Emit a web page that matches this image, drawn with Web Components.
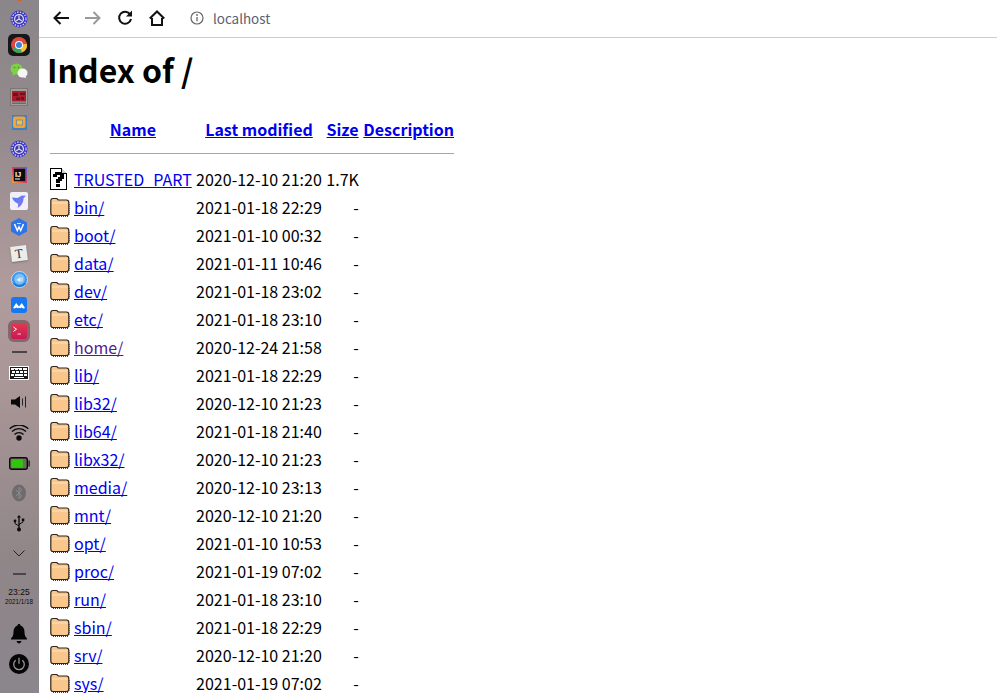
<!DOCTYPE html>
<html>
<head>
<meta charset="utf-8">
<title>Index of /</title>
<style>
  html, body { margin: 0; height: 693px; overflow: hidden; background: #fff; }
  body { display: flex; font-family: "Noto Sans CJK SC", "Noto Sans", sans-serif; }
  browser-window { flex: 1; min-width: 0; }
</style>
</head>
<body>
<desktop-dock></desktop-dock>
<browser-window>
  <browser-bar url="localhost"></browser-bar>
  <index-page heading="Index of /"></index-page>
</browser-window>

<script>
'use strict';

(function () {
  const GEAR = `
    <svg width="18" height="18" viewBox="0 0 18 18">
      <circle cx="9" cy="9" r="8.500" fill="#3a34c8"/>
      <circle cx="9" cy="9" r="7" fill="none" stroke="#dcdaf6" stroke-width="1.300" stroke-dasharray="1.500 1.300"/>
      <circle cx="9" cy="9" r="5" fill="#e4e2f8"/>
      <circle cx="9" cy="9" r="3.800" fill="#3f3a9c"/>
      <path d="M9 9V5.500M9 9l3 1.900M9 9l-3 1.900" stroke="#dedcf6" stroke-width="1.200"/>
    </svg>`;

  // [slot height, icon markup]
  const DOCK_ITEMS = [
    [26, GEAR],
    [26, `<svg width="22" height="22" viewBox="0 0 22 22">
      <rect width="22" height="22" rx="5" fill="#15171a"/>
      <circle cx="11" cy="11" r="8" fill="#e0483c"/>
      <path d="M11 11L4.100 15A8 8 0 0 0 14 18.400z" fill="#3ba55a"/>
      <path d="M11 11l3 7.400A8 8 0 0 0 18.900 9.800z" fill="#f4c430"/>
      <circle cx="11" cy="11" r="4" fill="#fff"/>
      <circle cx="11" cy="11" r="3" fill="#3b82e0"/>
    </svg>`],
    [26, `<svg width="18" height="16" viewBox="0 0 18 16">
      <ellipse cx="6.500" cy="6" rx="6" ry="5.500" fill="#7ed048"/>
      <path d="M3 10l-.8 3 3.400-2z" fill="#7ed048"/>
      <circle cx="4.500" cy="4.500" r=".8" fill="#4a8a22"/><circle cx="8.500" cy="4.500" r=".8" fill="#4a8a22"/>
      <ellipse cx="12.500" cy="10" rx="5" ry="4.500" fill="#f6f6f4"/>
      <path d="M15 13.500l1.400 2-3.400-1.500z" fill="#f6f6f4"/>
    </svg>`],
    [25, `<svg width="18" height="18" viewBox="0 0 18 18">
      <rect width="18" height="18" rx="1.500" fill="#6f6b69"/>
      <rect x=".8" y=".8" width="16.400" height="16.400" rx="1" fill="#a39e9b"/>
      <rect x="2" y="3" width="14" height="10.500" fill="#a81e2c"/>
      <path d="M3 5h5v3H3zM10 5h5v2h-5zM6 9.500h4v2.500H6zM11 9h3v3h-3z" fill="#6a1420"/>
      <rect x="2" y="14.500" width="14" height="1.500" fill="#6e6a68"/>
    </svg>`],
    [26, `<svg width="15" height="15" viewBox="0 0 15 15">
      <rect width="15" height="15" fill="#3f7fc2"/>
      <rect x="1" y="1.500" width="12.500" height="11.500" rx="2" fill="#f3a433"/>
      <rect x="4.500" y="5" width="6" height="5" fill="#eec24a" stroke="#6a86a8" stroke-width=".8"/>
    </svg>`],
    [27, GEAR],
    [26, `<svg width="15" height="16" viewBox="0 0 15 16">
      <defs><linearGradient id="ij" x1="0" y1="1" x2="1" y2="0"><stop offset="0" stop-color="#f0a03a"/><stop offset=".5" stop-color="#d83a6a"/><stop offset="1" stop-color="#4a6ad8"/></linearGradient></defs>
      <rect width="15" height="16" fill="url(#ij)"/>
      <rect x="1.800" y="1.800" width="11.400" height="12.400" fill="#0c0c0e"/>
      <text x="3" y="10" font-family="Liberation Sans" font-weight="700" font-size="7.500" fill="#fff">IJ</text>
      <rect x="3" y="11.500" width="5" height="1" fill="#fff"/>
    </svg>`],
    [26, `<svg width="18" height="18" viewBox="0 0 18 18">
      <defs><linearGradient id="bd" x1="0" y1="0" x2="1" y2="1"><stop offset="0" stop-color="#4a82f0"/><stop offset="1" stop-color="#9a72f2"/></linearGradient></defs>
      <rect width="18" height="18" rx="2" fill="#f1f0f8"/>
      <path d="M2 5.500l5.500.5L12 3.500l4 .2-2.500 2.600C13.500 11 11 14.500 7.500 16c.8-1.800.8-3.300.3-4.500C5 10.500 3 8.500 2 5.500z" fill="url(#bd)"/>
    </svg>`],
    [26, `<svg width="16" height="18" viewBox="0 0 16 18">
      <path d="M8 0l8 4.500v9L8 18l-8-4.500v-9z" fill="#2f73e8"/>
      <path d="M3.500 6l2.800 6.500L8 9l1.700 3.500L12.500 6" fill="none" stroke="#fff" stroke-width="1.500"/>
      <path d="M6 5.500h4" stroke="#cfe0fb"/>
    </svg>`],
    [26, `<div style="width:16px;height:15px;background:#ececea;transform:rotate(-7deg);font:13px/15px 'Liberation Serif',serif;color:#333;text-align:center;box-shadow:0 1px 2px #0004">T</div>`],
    [26, `<svg width="17" height="17" viewBox="0 0 17 17">
      <circle cx="8.500" cy="8.500" r="8" fill="#3a92ea" stroke="#bcdcf8" stroke-width="1"/>
      <circle cx="8.500" cy="8" r="5.400" fill="#7cc0f4"/>
      <path d="M5.500 9l4-3v5z" fill="#e8f3fd"/>
      <path d="M11 6.500v4" stroke="#e8f3fd"/>
      <path d="M2.500 12.500a8 8 0 0 0 12 0" fill="none" stroke="#1f72d6" stroke-width="1.500"/>
    </svg>`],
    [26, `<svg width="16" height="16" viewBox="0 0 16 16">
      <rect width="16" height="16" rx="3" fill="#1677f0"/>
      <path d="M2 11l3.200-5 2.800 3.500L10.800 6 14 11c-1.500 1-3 0-3.500-.5-.7 1-1.800 1-2.500.3-.7.700-1.800.700-2.500-.3C5 11 3.500 12 2 11z" fill="#fff"/>
    </svg>`],
    [26, `<svg width="22" height="22" viewBox="0 0 22 22">
      <rect width="22" height="22" rx="6" fill="#86656c"/>
      <defs><linearGradient id="tm" x1="0" y1="0" x2="0" y2="1"><stop offset="0" stop-color="#e23a4e"/><stop offset="1" stop-color="#c81858"/></linearGradient></defs>
      <rect x="3" y="3" width="16" height="16" rx="2.500" fill="url(#tm)"/>
      <path d="M5.500 7l3 2.200-3 2.200" fill="none" stroke="#fff" stroke-width="1"/>
      <path d="M9.500 14h3.500" stroke="#f7c9d2" stroke-width="1"/>
    </svg>`],
    [16, `<div style="width:15px;height:2px;background:#4a4648"></div>`],
    [26, `<svg width="20" height="14" viewBox="0 0 20 14" shape-rendering="crispEdges">
      <rect x=".5" y=".5" width="19" height="13" fill="#1a1a1a" stroke="#fff"/>
      <path d="M2 3h2v-1h-2zM5 3h2v-1h-2zM8 3h2v-1h-2z" fill="#fff"/>
      <path d="M2 2h3v2H2zM6 2h3v2H6zM10 2h3v2h-3zM14 2h4v2h-4zM3 5h3v2H3zM7 5h3v2H7zM11 5h3v2h-3zM15 5h3v2h-3zM2 8h3v2H2zM6 8h8v2H6zM15 8h3v2h-3zM5 11h10v1H5z" fill="#fff"/>
    </svg>`],
    [32, `<svg width="16" height="12" viewBox="0 0 16 12">
      <path d="M0 3.500h4L9 0v12L4 8.500H0z" fill="#0a0a0a"/>
      <path d="M11.500 2.500v7" stroke="#222" stroke-width="1"/><path d="M14.500 .5v11" stroke="#222" stroke-width="1"/>
    </svg>`],
    [30, `<svg width="20" height="16" viewBox="0 0 20 16">
      <circle cx="10" cy="13" r="2.700" fill="#0a0a0a"/>
      <path d="M5.500 9.500a6.400 6.400 0 0 1 9 0M3 6.500a10 10 0 0 1 14 0M.7 3.800a13.500 13.500 0 0 1 18.600 0" fill="none" stroke="#0a0a0a" stroke-width="1.400"/>
    </svg>`],
    [30, `<svg width="21" height="13" viewBox="0 0 21 13">
      <rect x=".7" y=".7" width="17.600" height="11.600" rx="2" fill="#6f6a62" stroke="#0a0a0a" stroke-width="1.400"/>
      <rect x="2.300" y="2.300" width="11.700" height="8.400" fill="#33c40f"/>
      <rect x="19.500" y="3.500" width="1.200" height="6" fill="#0a0a0a"/>
    </svg>`],
    [30, `<svg width="14" height="18" viewBox="0 0 14 18">
      <ellipse cx="7" cy="9" rx="7" ry="8.500" fill="#6f6b6c"/>
      <path d="M3.800 5.800l6 6.200L7 14.500v-11l2.800 2.500-6 6.200" fill="none" stroke="#8f8b8c" stroke-width="1"/>
    </svg>`],
    [30, `<svg width="12" height="17" viewBox="0 0 12 17">
      <path d="M6 1v15" stroke="#0a0a0a" stroke-width="1.300"/>
      <path d="M6 0l2 2.500H4z" fill="#0a0a0a"/>
      <circle cx="6" cy="14.500" r="2" fill="#0a0a0a"/>
      <path d="M6 11L2 8.500V7M6 9.500l4-2.500V5.500" fill="none" stroke="#0a0a0a" stroke-width="1"/>
      <circle cx="2" cy="6" r="1.400" fill="#0a0a0a"/>
      <rect x="8.800" y="3.500" width="2.500" height="2.500" fill="#0a0a0a"/>
    </svg>`],
    [30, `<svg width="12" height="7" viewBox="0 0 12 7"><path d="M.5.500L6 6 11.500.500" fill="none" stroke="#222" stroke-width="1"/></svg>`],
    [12, `<div style="width:13px;height:2px;background:#4a4648"></div>`],
    [34, `<div class="clock"><div class="time">23:25</div><div class="date">2021/1/18</div></div>`],
    [7, ``],
    [26, `<svg width="16" height="20" viewBox="0 0 16 20">
      <path d="M8 0c.9 0 1.500.7 1.500 1.500C12.300 2.300 13.500 5 13.500 8c0 3.500 1 5 2.500 6.500v1H0v-1C1.500 13 2.500 11.500 2.500 8c0-3 1.200-5.700 4-6.500C6.500.7 7.100 0 8 0z" fill="#050505"/>
      <path d="M5.500 17h5c-.4 1.500-1.400 2.500-2.500 2.500s-2.100-1-2.500-2.500z" fill="#050505"/>
    </svg>`],
    [34, `<svg width="20" height="20" viewBox="0 0 20 20">
      <circle cx="10" cy="10" r="10" fill="#050505"/>
      <path d="M6.700 6.200a5.300 5.300 0 1 0 6.600 0" fill="none" stroke="#9a9497" stroke-width="1.300"/>
      <path d="M10 3.800v6" stroke="#9a9497" stroke-width="1.300"/>
    </svg>`]
  ];

  class DesktopDock extends HTMLElement {
    constructor() {
      super();
      const shadow = this.attachShadow({ mode: 'open' });
      const slots = DOCK_ITEMS.map(([h, icon]) => `<div class="slot" style="height:${h}px">${icon}</div>`).join('');
      shadow.innerHTML = `
      <style>
        :host {
          display: block;
          flex: none;
          width: 39px;
          height: 693px;
          overflow: hidden;
          background: linear-gradient(#8a8689 0, #948a8d 130px, #b19c9d 290px, #a89596 400px, #8f8688 560px, #8b858d 693px);
        }
        .top { height: 6px; display: flex; justify-content: center; padding-right: 1px; }
        .top i { width: 5px; height: 1px; background: #d8622a; }
        .slot { display: flex; align-items: center; justify-content: center; padding-right: 1px; }
        svg { display: block; }
        .clock { font-family: "Liberation Sans", sans-serif; text-align: center; color: #0c0c0c; line-height: 9px; }
        .time { font-size: 8.500px; }
        .date { font-size: 6.300px; }
      </style>
      <div class="top"><i></i></div>
      ${slots}
      `;
    }
  }
  customElements.define('desktop-dock', DesktopDock);

  class BrowserBar extends HTMLElement {
    constructor() {
      super();
      const shadow = this.attachShadow({ mode: 'open' });
      shadow.innerHTML = `
      <style>
        :host {
          display: flex;
          align-items: center;
          height: 36px;
          padding-bottom: 1px;
          border-bottom: 1px solid #ccc;
          color: #5a6270;
          font-size: 13.400px;
        }
        svg { display: block; flex: none; }
        .back { margin-left: 14px; }
        .fwd { margin-left: 16px; }
        .reload { margin-left: 16px; }
        .home { margin-left: 16px; }
        .info { margin-left: 25px; }
        .url { margin-left: 9px; }
      </style>
      <svg class="back" width="16" height="14" viewBox="0 0 16 14"><path d="M16 7H2M7.500 1L1.500 7l6 6" fill="none" stroke="#111" stroke-width="2"/></svg>
      <svg class="fwd" width="16" height="14" viewBox="0 0 16 14"><path d="M0 7h14M8.500 1l6 6-6 6" fill="none" stroke="#9a9a9a" stroke-width="2"/></svg>
      <svg class="reload" width="16" height="16" viewBox="0 0 16 16"><path d="M13.200 4.500A6 6 0 1 0 14 9" fill="none" stroke="#111" stroke-width="2"/><path d="M15 .5v6H9z" fill="#111"/></svg>
      <svg class="home" width="16" height="16" viewBox="0 0 16 16"><path d="M3 8v7h10V8M.8 8.500L8 1.500l7.200 7" fill="none" stroke="#111" stroke-width="2"/></svg>
      <svg class="info" width="14" height="14" viewBox="0 0 14 14"><circle cx="7" cy="7" r="6" fill="none" stroke="#666" stroke-width="1.200"/><path d="M7 6v4.200" stroke="#666" stroke-width="1.300"/><circle cx="7" cy="4" r=".9" fill="#666"/></svg>
      <span class="url">${this.getAttribute('url')}</span>
      `;
    }
  }
  customElements.define('browser-bar', BrowserBar);

  const FOLDER = `<svg width="20" height="22" viewBox="0 0 20 22">
    <path d="M.8 5C.8 3.300 1.600 2.500 2.800 2.500h4l1.500 1.500H16.500C18 4 18.800 5 18.800 6.500v10.500c0 1.500-.8 2.500-2.300 2.500H3c-1.400 0-2.200-1-2.200-2.500z" fill="#f9c68c" stroke="#2e2418" stroke-width="1.200"/>
    <path d="M2 7h15.500" stroke="#fde3c4"/>
    <path d="M3 20.500h15M19.800 8v10.500" stroke="#4a3a28" stroke-dasharray="1 1"/>
  </svg>`;

  const UNKNOWN = `<svg width="20" height="22" viewBox="0 0 20 22" shape-rendering="crispEdges">
    <path d="M.5.500h11l5 5v16H.5z" fill="#fff" stroke="#000"/>
    <path d="M11.500.500v5h5" fill="#ccc" stroke="#000"/>
    <path d="M3 6h2V4h7v2h2v5h-2v2h-2v2H6v-4h2V9h2V7H7v2H3z" fill="#000"/>
    <rect x="6" y="16" width="4" height="3" fill="#000"/>
    <path d="M17 6v16H2v-.5h14.500V6z" fill="#777"/>
  </svg>`;

  const ROWS = [
    ['TRUSTED_PART', '2020-12-10 21:20', '1.7K', 'file'],
    ['bin/', '2021-01-18 22:29', '-'],
    ['boot/', '2021-01-10 00:32', '-'],
    ['data/', '2021-01-11 10:46', '-'],
    ['dev/', '2021-01-18 23:02', '-'],
    ['etc/', '2021-01-18 23:10', '-'],
    ['home/', '2020-12-24 21:58', '-', 'visited'],
    ['lib/', '2021-01-18 22:29', '-'],
    ['lib32/', '2020-12-10 21:23', '-'],
    ['lib64/', '2021-01-18 21:40', '-'],
    ['libx32/', '2020-12-10 21:23', '-'],
    ['media/', '2020-12-10 23:13', '-'],
    ['mnt/', '2020-12-10 21:20', '-'],
    ['opt/', '2021-01-10 10:53', '-'],
    ['proc/', '2021-01-19 07:02', '-'],
    ['run/', '2021-01-18 23:10', '-'],
    ['sbin/', '2021-01-18 22:29', '-'],
    ['srv/', '2020-12-10 21:20', '-'],
    ['sys/', '2021-01-19 07:02', '-']
  ];

  class IndexPage extends HTMLElement {
    constructor() {
      super();
      const shadow = this.attachShadow({ mode: 'open' });
      const rows = ROWS.map(([name, date, size, kind]) => `
        <tr>
          <td class="icon">${kind === 'file' ? UNKNOWN : FOLDER}</td>
          <td><a href="#" class="${kind === 'visited' ? 'seen' : ''}">${name}</a></td>
          <td>${date}</td>
          <td class="size">${size}</td>
          <td></td>
        </tr>`).join('');
      shadow.innerHTML = `
      <style>
        :host { display: block; padding: 8px; color: #000; font-size: 16px; }
        h1 { margin: 0 0 19px; font-size: 32px; line-height: 46px; font-weight: 700; }
        table { border-collapse: separate; border-spacing: 2px; }
        td, th { padding: 1px; height: 24px; line-height: 24px; white-space: nowrap; }
        th { font-weight: 700; text-align: center; height: 30px; }
        td:nth-child(2), th:nth-child(2) { padding-right: 1.400px; }
        td:nth-child(3), th:nth-child(3) { padding-right: 1.500px; }
        th:nth-child(4) { padding-right: 1.500px; }
        a { color: #00e; }
        a.seen { color: #551a8b; }
        .size { text-align: right; padding-right: 1.500px; }
        .icon { width: 20px; }
        .icon svg { display: block; }
        .rule td { height: 1px; padding: 0 0 0 1px; line-height: 0; }
        hr { margin: 6px 1px 10px 0; border: 0; border-top: 1px solid #a6a6a6; }
      </style>
      <h1>${this.getAttribute('heading')}</h1>
      <table>
        <tr>
          <th></th>
          <th><a href="#">Name</a></th>
          <th><a href="#">Last modified</a></th>
          <th><a href="#">Size</a></th>
          <th><a href="#">Description</a></th>
        </tr>
        <tr class="rule"><td colspan="5"><hr></td></tr>
        ${rows}
      </table>
      `;
    }
  }
  customElements.define('index-page', IndexPage);
})();
</script>
</body>
</html>
